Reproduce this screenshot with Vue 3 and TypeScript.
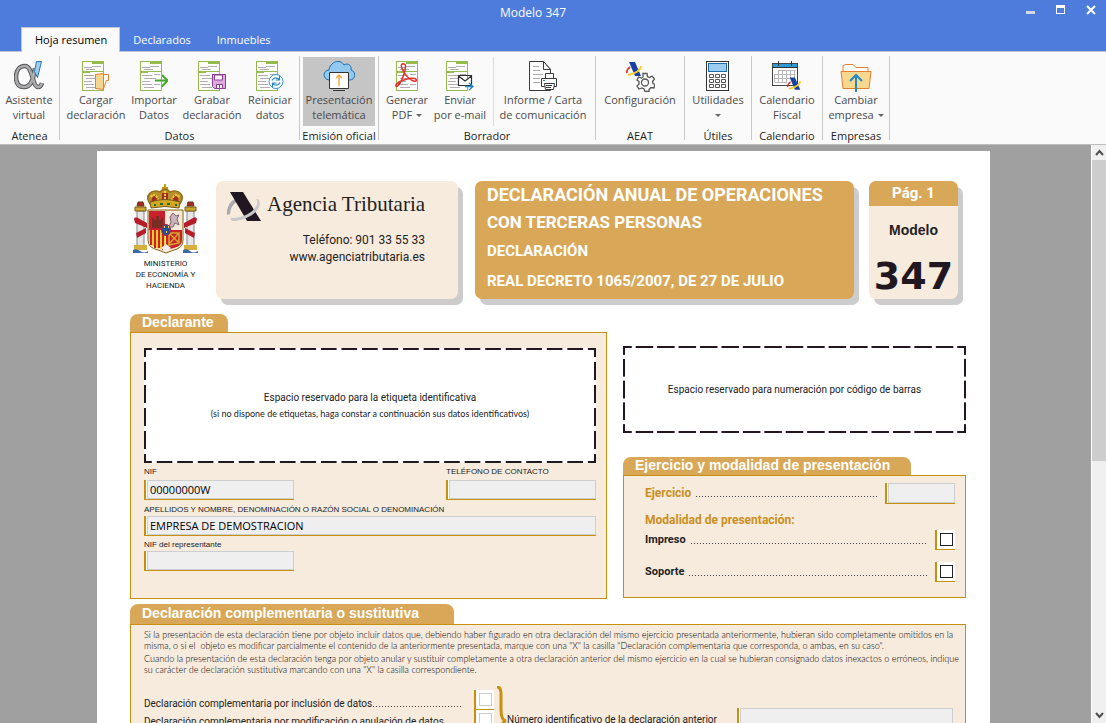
<script setup lang="ts">
import { ref } from 'vue'

interface Action {
  icon: string
  lines: string[]
  menu?: boolean
  active?: boolean
  split?: boolean
  size: string
}
interface Group {
  label: string
  actions: Action[]
}

const tabs = ['Hoja resumen', 'Declarados', 'Inmuebles']
const activeTab = ref(0)

const groups: Group[] = [
  { label: 'Atenea', actions: [{ icon: 'alpha', lines: ['Asistente', 'virtual'], size: 'm' }] },
  {
    label: 'Datos',
    actions: [
      { icon: 'load', lines: ['Cargar', 'declaración'], size: 'm' },
      { icon: 'import', lines: ['Importar', 'Datos'], size: 'm' },
      { icon: 'save', lines: ['Grabar', 'declaración'], size: 'm' },
      { icon: 'reset', lines: ['Reiniciar', 'datos'], size: 'm' },
    ],
  },
  { label: 'Emisión oficial', actions: [{ icon: 'cloud', lines: ['Presentación', 'telemática'], active: true, size: 'l' }] },
  {
    label: 'Borrador',
    actions: [
      { icon: 'pdf', lines: ['Generar', 'PDF'], menu: true, size: 's' },
      { icon: 'mail', lines: ['Enviar', 'por e-mail'], size: 'm' },
      { icon: 'print', lines: ['Informe / Carta', 'de comunicación'], split: true, size: 'xl' },
    ],
  },
  { label: 'AEAT', actions: [{ icon: 'config', lines: ['Configuración'], size: 'xl' }] },
  { label: 'Útiles', actions: [{ icon: 'calc', lines: ['Utilidades', ''], menu: true, size: 'm' }] },
  { label: 'Calendario', actions: [{ icon: 'calendar', lines: ['Calendario', 'Fiscal'], size: 'm' }] },
  { label: 'Empresas', actions: [{ icon: 'company', lines: ['Cambiar', 'empresa'], menu: true, size: 'm' }] },
]

const nif = ref('00000000W')
const phone = ref('')
const companyName = ref('EMPRESA DE DEMOSTRACION')
const agentNif = ref('')
const year = ref('')
const previousId = ref('')
</script>

<template>
  <div class="window">
    <svg class="defs" aria-hidden="true">
      <symbol id="doc" viewBox="0 0 28 32">
        <rect x="0.5" y="1.5" width="21" height="29" fill="#fff" stroke="#95bb4c" />
        <path d="M10 1h12v3H10zM0 11h8v2H0zM8 11h14v1H8z" fill="#95bb4c" />
        <path d="M2 7.500h8M10 6.500h9M4 9.500h9M2 15.500h10M14 14.500h6M4 18.500h12M2 21.500h8M2 24.500h10M4 27.500h10M14 24.500h6" stroke="#b3adb3" fill="none" />
      </symbol>
      <symbol id="aeat" viewBox="0 0 17 15">
        <path d="M3 0h6l6 14H9z" fill="#1740a0" />
        <path d="M4 5Q0 8 1 11" stroke="#e3342f" stroke-width="1.800" fill="none" />
        <path d="M15 4Q15 10 2 13" stroke="#f7cf2d" stroke-width="2" fill="none" />
      </symbol>
    </svg>

    <header class="chrome">
      <div class="titlebar">
        <h1>Modelo 347</h1>
        <div class="controls">
          <button type="button" aria-label="Minimizar"><svg width="10" height="10"><path d="M0 6h9v3H0z" fill="#d5d8e2" /></svg></button>
          <button type="button" aria-label="Maximizar"><svg width="10" height="10"><path d="M0 0h9v9H0zM1 3v5h7V3z" fill="#fff" fill-rule="evenodd" /></svg></button>
          <button type="button" aria-label="Cerrar"><svg width="10" height="10"><path d="M1 1l8 8M9 1l-8 8" stroke="#fff" stroke-width="2" /></svg></button>
        </div>
      </div>
      <nav class="tabs">
        <button v-for="(tab, i) in tabs" :key="tab" type="button" :class="{ current: i === activeTab }" @click="activeTab = i">{{ tab }}</button>
      </nav>
    </header>

    <div class="ribbon">
      <section v-for="group in groups" :key="group.label" class="group">
        <div class="actions">
          <button v-for="action in group.actions" :key="action.icon" type="button" class="action" :class="[action.size, { active: action.active, split: action.split }]">
            <svg v-if="action.icon === 'alpha'" width="30" height="32" viewBox="0 0 30 32">
              <path d="M21 8C19 22 16 27 10 27C4 27 2 23 2 17C2 11 5 6 11 6C19 6 18 27 24 27Q27 27 28 23" fill="none" stroke="#58585a" stroke-width="4.500" />
              <path d="M21 8C19 22 16 27 10 27C4 27 2 23 2 17C2 11 5 6 11 6C19 6 18 27 24 27Q27 27 28 23" fill="none" stroke="#aaa9ab" stroke-width="2.500" />
              <path d="M22.500 1.500h5l-4 16-3-6z" fill="#9fcdf0" stroke="#2474b8" />
            </svg>
            <svg v-else-if="action.icon === 'load'" width="28" height="32">
              <use href="#doc" width="28" height="32" />
              <path d="M13.500 14.500h13v6h-2l-3 8h-8z" fill="#fff" stroke="#e5802c" />
              <path d="M13.500 14.500l8-1v16l-8-1z" fill="#f5d78f" stroke="#e5802c" />
            </svg>
            <svg v-else-if="action.icon === 'import'" width="28" height="32">
              <use href="#doc" width="28" height="32" />
              <path d="M15 20.500h12M22 15l5.500 5.500-5.500 6" fill="none" stroke="#43a82d" stroke-width="2" />
            </svg>
            <svg v-else-if="action.icon === 'save'" width="28" height="32">
              <use href="#doc" width="28" height="32" />
              <path d="M14.500 14.500h13v14h-11l-2-2z" fill="#dfaade" stroke="#8a3d91" />
              <path d="M16.500 15h8v5h-8zM18.500 24.500h6v4h-6z" fill="#fff" stroke="#8a3d91" /><path d="M21 25h1v3h-1z" fill="#8a3d91" />
            </svg>
            <svg v-else-if="action.icon === 'reset'" width="28" height="32">
              <use href="#doc" width="28" height="32" />
              <circle cx="20" cy="21.500" r="7" fill="#fff" stroke="#3298cf" />
              <path d="M16 20.500q2-4 6-2l1.500 1.500m0-4v4h-4M24 22.500q-2 4-6 2l-1.500-1.500m0 4v-4h4" fill="none" stroke="#2388c4" stroke-width="1.200" />
            </svg>
            <svg v-else-if="action.icon === 'cloud'" width="32" height="32">
              <path d="M6 20C-1 19 0 10 6 10C7 2 17-2 21 5C26 2 29 7 28 10C34 12 32 20 27 20z" fill="#93c9ee" stroke="#1a6cae" />
              <path d="M6.500 12.500h19v16h-19z" fill="#fff" stroke="#333" />
              <path d="M16 26V15m-3 3l3-3 3 3" fill="none" stroke="#f1a93a" stroke-width="1.400" /><path d="M10 30.500h12" stroke="#333" />
            </svg>
            <svg v-else-if="action.icon === 'pdf'" width="26" height="32" viewBox="-2 0 26 32">
              <use href="#doc" width="28" height="32" />
              <path d="M8 4C5 3 4 6 8 12C11 18 17 22 20 21C22 19 17 17 11 19C4 21-1 24 0 26C2 28 6 20 8 14C10 8 10 4 8 4z" fill="none" stroke="#e0302b" stroke-width="1.500" />
            </svg>
            <svg v-else-if="action.icon === 'mail'" width="28" height="32">
              <use href="#doc" width="28" height="32" />
              <path d="M12.500 15.500h13v10h-13zM12.500 16l6.500 5 6.500-5" fill="#fff" stroke="#2e2e2e" stroke-width="1.200" />
              <path d="M19 26.500h8m-4-3.500l4 3.500-4 3.500" fill="none" stroke="#2388c4" stroke-width="1.400" />
            </svg>
            <svg v-else-if="action.icon === 'print'" width="28" height="32">
              <path d="M.5 1.500h14l7 8v21H.5z" fill="#fff" stroke="#3a3a3a" /><path d="M14.500 1.500v8h7z" fill="#fff" stroke="#3a3a3a" />
              <path d="M4 6.500h6M4 10.500h7M4 14.500h10M4 18.500h7M4 22.500h7" stroke="#aaa" />
              <path d="M16.500 13.500h8v5h-8zM12.500 18.500h15v8h-15z" fill="#fff" stroke="#3a3a3a" />
              <path d="M15.500 23.500h10l-1 6h-8z" fill="#fff" stroke="#3a3a3a" /><path d="M17 25.500h6M17 27.500h5" stroke="#3a3a3a" /><path d="M14 20h2v1h-2z" fill="#2388c4" />
            </svg>
            <svg v-else-if="action.icon === 'config'" width="29" height="32">
              <use href="#aeat" x="0" y="2" width="17" height="15" />
              <path d="M17 13.500h4l.5 3 2 1 2.500-1.500 2.500 3-2 2.500.5 2 2 1-1 3.500-3-.5-2 2v2h-4l-1-2.500-2-1-3 1-2-3 2-2v-2.500l-2-1.500 1.500-3 3 1 1.500-1z" fill="#fafafa" stroke="#555" stroke-width="1.300" />
              <circle cx="19" cy="22.500" r="3.500" fill="#fff" stroke="#555" stroke-width="1.300" />
            </svg>
            <svg v-else-if="action.icon === 'calc'" width="24" height="32">
              <rect x=".5" y="1.500" width="22" height="29" fill="#fff" stroke="#333" /><rect x="2.500" y="3.500" width="18" height="8" fill="#9ccdf0" stroke="#1d6caf" />
              <path v-for="y in [14, 19, 24]" :key="y" :d="`M3.500 ${y}.5h4v3h-4zM9.500 ${y}.5h4v3h-4zM15.500 ${y}.5h4v3h-4z`" fill="#fff" stroke="#555" />
            </svg>
            <svg v-else-if="action.icon === 'calendar'" width="30" height="32">
              <rect x=".5" y="3.500" width="25" height="22" fill="#fff" stroke="#444" /><path d="M1 4h24v4H1z" fill="#2f9bd3" />
              <path d="M6.500 1v5M19.500 1v5M0 7.500h26" stroke="#333" />
              <path d="M6.500 10.500h17M2.500 14.500h21M2.500 18.500h16M2.500 22.500h12M2.500 14v8M6.500 10v13M10.500 10v13M14.500 10v13M18.500 10v8M22.500 10v8" fill="none" stroke="#b8b8b8" />
              <use href="#aeat" x="15" y="17" width="15" height="14" />
            </svg>
            <svg v-else width="32" height="32">
              <path d="M3 11V5.500l3-1h7l3 3h12V12" fill="#fff" stroke="#e5802c" /><path d="M1 11.500h30l-2 17H3z" fill="#f7d88f" stroke="#e5802c" />
              <path d="M16 32V15m-6 6l6-6 6 6" fill="none" stroke="#2388c4" stroke-width="2" />
            </svg>
            <span v-for="(line, i) in action.lines" :key="i" class="line">{{ line }}<i v-if="action.menu && i === 1" class="caret" :class="{ alone: !line }"></i></span>
          </button>
        </div>
        <h2>{{ group.label }}</h2>
      </section>
    </div>

    <div class="workspace">
      <div class="viewport">
        <main class="sheet">
          <div class="masthead">
            <div class="ministry">
              <svg width="66" height="70" viewBox="0 0 66 70" role="img" aria-label="Escudo de España">
                <path d="M31 0h2v3h2v2h-6V3h2z" fill="#c99b12" />
                <path d="M18 21C10 11 19 5 27 8Q32 2 37 8C45 5 54 11 46 21z" fill="#b8912a" stroke="#94701a" stroke-width="1.500" />
                <path d="M19 19Q17 13 23 11L27 19zM29 18V9h6v9zM45 19Q47 13 41 11L37 19z" fill="#a42a22" />
                <path d="M18 13Q22 7 26 18M32 7v12M46 13Q42 7 38 18" fill="none" stroke="#efcf46" stroke-width="2" stroke-dasharray="2 1" />
                <path d="M17 18q15-5 30 0l-1 6q-14-3-28 0z" fill="#d2a823" stroke="#75561a" /><path d="M21 21h2m4-1h3m4 0h3m5 1h2" stroke="#236b35" stroke-width="2" />
                <path d="M4 27h7v35H4zM54 27h7v35h-7z" fill="#e6e6e6" stroke="#858585" />
                <path d="M2 23h11v4H2zM52 23h11v4H52z" fill="#cda72d" stroke="#785c16" />
                <path d="M4 22l1-4h5l1 4zM54 22l1-4h5l1 4z" fill="#ad2925" stroke="#5b3b14" />
                <path d="M1 61h13v5H1zM51 61h13v5H51z" fill="#d5b03c" /><path d="M0 66q3-2 7 1t8 0v2H0zM50 66q4-2 7 1t8 0v2H50z" fill="#3c69a2" />
                <path d="M1 35q1-3 4-1l9 5v5L2 39zM64 35q-1-3-4-1l-9 5v5l12-5zM3 49l10-5v5L4 54zM62 49l-10-5v5l9 5z" fill="#b51e29" />
                <path d="M15 26h35v30q0 8-9 10l-8 3-8-3q-10-2-10-10z" fill="#f4ead7" stroke="#83610e" />
                <path d="M16 27h16v19H16z" fill="#ca202d" /><path d="M19 44V34h2v2h2v-4h3v4h2v-2h2v10z" fill="#7b2d24" />
                <path d="M36 43l2-5-1-5 3-4 3 3 3-1-2 4 2 6-4-2-2 4z" fill="#c9b3bd" stroke="#80606d" />
                <path d="M16 46h16v20l-8-2q-8-2-8-8z" fill="#f5cc2c" /><path d="M18 46v15M22 46v18M26 46v18M30 46v20" stroke="#cc202e" stroke-width="2" />
                <path d="M33 46h16v10q0 6-8 8l-8 2z" fill="#c91f2b" /><path d="M36 49h10v10l-10 2zM36 49l10 10M46 49L36 60" fill="none" stroke="#d4a92b" stroke-width="1.500" />
                <path d="M28 64l5-4 5 4-5 4z" fill="#f4eee4" /><ellipse cx="33" cy="46" rx="4.500" ry="5.500" fill="#23509b" stroke="#b72432" />
                <path d="M31 43h1m3 0h1m-3 5h1" stroke="#f1d44b" stroke-width="2" />
              </svg>
              <p>MINISTERIO<br />DE ECONOMÍA Y<br />HACIENDA</p>
            </div>
            <div class="card agency">
              <div class="brand">
                <svg width="35" height="30" viewBox="0 0 35 30" aria-hidden="true">
                  <path d="M9 6Q-1 12 0 23l3-1Q3 14 11 9z" fill="#aaa" /><path d="M3 0h13l18 29H20z" fill="#211721" />
                  <path d="M29 7C35 13 21 27 3 26L5 29C23 29 38 15 31 7z" fill="#c9c9c9" />
                </svg>
                <span>Agencia Tributaria</span>
              </div>
              <p>Teléfono: 901 33 55 33<br />www.agenciatributaria.es</p>
            </div>
            <div class="card heading">
              <p class="first">DECLARACIÓN ANUAL DE OPERACIONES</p>
              <p class="second">CON TERCERAS PERSONAS</p>
              <p class="third">DECLARACIÓN</p>
              <p class="fourth">REAL DECRETO 1065/2007, DE 27 DE JULIO</p>
            </div>
            <div class="card model">
              <p class="page-no">Pág. 1</p>
              <p class="caption">Modelo</p>
              <p class="number">347</p>
            </div>
          </div>

          <div class="columns">
            <section>
              <h3 class="tab">Declarante</h3>
              <div class="panel declarant">
                <div class="dashed">
                  <p>Espacio reservado para la etiqueta identificativa</p>
                  <p class="small">(si no dispone de etiquetas, haga constar a continuación sus datos identificativos)</p>
                </div>
                <div class="pair">
                  <div class="short"><label for="nif">NIF</label><div class="field"><input id="nif" v-model="nif" type="text" /></div></div>
                  <div class="short"><label for="phone">TELÉFONO DE CONTACTO</label><div class="field"><input id="phone" v-model="phone" type="text" /></div></div>
                </div>
                <label class="low" for="company">APELLIDOS Y NOMBRE, DENOMINACIÓN O RAZÓN SOCIAL O DENOMINACIÓN</label>
                <div class="field"><input id="company" v-model="companyName" type="text" /></div>
                <label for="agent">NIF del representante</label>
                <div class="field short"><input id="agent" v-model="agentNif" type="text" /></div>
              </div>
            </section>
            <section class="right">
              <div class="dashed barcode"><p>Espacio reservado para numeración por código de barras</p></div>
              <h3 class="tab">Ejercicio y modalidad de presentación</h3>
              <div class="panel mode">
                <div class="entry year"><label for="year">Ejercicio</label><span class="dots"></span><div class="field"><input id="year" v-model="year" type="text" /></div></div>
                <h4>Modalidad de presentación:</h4>
                <div class="entry"><label for="printed">Impreso</label><span class="dots"></span><div class="tick"><input id="printed" type="checkbox" /></div></div>
                <div class="entry"><label for="support">Soporte</label><span class="dots"></span><div class="tick"><input id="support" type="checkbox" /></div></div>
              </div>
            </section>
          </div>

          <section class="amend">
            <h3 class="tab">Declaración complementaria o sustitutiva</h3>
            <div class="panel">
              <p class="legal">
                <span class="full">Si la presentación de esta declaración tiene por objeto incluir datos que, debiendo haber figurado en otra declaración del mismo ejercicio presentada anteriormente, hubieran sido completamente omitidos en la</span>
                <span>misma, o si el&nbsp; objeto es modificar parcialmente el contenido de la anteriormente presentada, marque con una "X" la casilla "Declaración complementaria que corresponda, o ambas, en su caso".</span>
              </p>
              <p class="legal">
                <span class="full">Cuando la presentación de esta declaración tenga por objeto anular y sustituir completamente a otra declaración anterior del mismo ejercicio en la cual se hubieran consignado datos inexactos o erróneos, indique</span>
                <span>su carácter de declaración sustitutiva marcando con una "X" la casilla correspondiente.</span>
              </p>
              <div class="options">
                <div class="names">
                  <div class="entry"><label for="add">Declaración complementaria por inclusión de datos</label><span class="dots"></span></div>
                  <div class="entry"><label for="modify">Declaración complementaria por modificación o anulación de datos</label></div>
                </div>
                <div class="ticks">
                  <div class="tick"><input id="add" type="checkbox" disabled /></div>
                  <div class="tick"><input id="modify" type="checkbox" disabled /></div>
                </div>
                <svg class="brace" width="10" height="70" viewBox="0 0 10 70" aria-hidden="true"><path d="M0 1Q4 1 4 8V24Q4 34 9 35Q4 36 4 46V62Q4 69 0 69" fill="none" stroke="#c8900f" stroke-width="3" /></svg>
                <label class="previous" for="previous">Número identificativo de la declaración anterior</label>
                <div class="field"><input id="previous" v-model="previousId" type="text" /></div>
              </div>
            </div>
          </section>
        </main>
      </div>
      <div class="scroll">
        <button type="button" aria-label="Subir"><svg width="9" height="7"><path d="M1 6l3.500-4L8 6" fill="none" stroke="#505050" stroke-width="2" /></svg></button>
        <div class="track"><div class="thumb"></div></div>
        <button type="button" aria-label="Bajar"><svg width="9" height="7"><path d="M1 1l3.500 4L8 1" fill="none" stroke="#505050" stroke-width="2" /></svg></button>
      </div>
    </div>
  </div>
</template>

<style>
body { margin: 0; }
</style>

<style scoped>
* { box-sizing: border-box; }
h1, h2, h3, h4, p { margin: 0; font-weight: 400; }
button { font: inherit; color: inherit; border: 0; padding: 0; background: none; }
svg { display: block; flex: none; }
.window { height: 100vh; display: flex; flex-direction: column; overflow: hidden; font: 11px/15px "Open Sans", "Noto Sans", sans-serif; color: #1e1e1e; }
.defs { width: 0; height: 0; position: absolute; }

.chrome { background: #4e7cdc; color: #fff; flex: none; }
.titlebar { display: flex; height: 27px; }
.titlebar h1 { flex: 1; padding-left: 50px; text-align: center; font-size: 12px; line-height: 26px; }
.controls { display: flex; }
.controls button { width: 30px; display: flex; justify-content: center; padding-top: 5px; }
.tabs { display: flex; height: 25px; padding-left: 21px; box-shadow: inset 0 -1px #c0c4cc; }
.tabs button { padding: 0 12px; border: 1px solid transparent; border-bottom: 0; line-height: 24px; }
.tabs .current { padding: 0 12px 0 13px; background: #fafafa; border-color: #c6c6c6; color: #000; }

.ribbon { flex: none; display: flex; height: 93px; padding: 4px 0; background: #fafafa; border-bottom: 1px solid #bdbdbd; }
.group { display: flex; flex-direction: column; padding: 1px 0 0; border-right: 1px solid #c8c8c8; }
.group h2 { text-align: center; font-size: 11px; line-height: 15px; margin-top: 2px; white-space: nowrap; }
.actions { display: flex; justify-content: center; padding: 0 3px; }
.group:first-child .actions { padding: 0 1px 0 0; }
.group:nth-child(2) .actions { padding: 0 0 0 7px; }
.group:nth-child(4) .actions { padding: 0 3px 0 4px; }
.group:nth-child(5) .actions { padding: 0; }
.group:nth-child(6) .actions, .group:nth-child(8) .actions { padding: 0 4px; }
.group:nth-child(7) .actions { padding: 0 6px; }
.action { height: 69px; display: flex; flex-direction: column; align-items: center; padding-top: 3px; color: #4a4a4a; line-height: 15px; white-space: nowrap; }
.action.s { width: 48px; }
.action.m { width: 58px; }
.action.l { width: 72px; }
.action.xl { width: 88px; }
.action.active { background: #c5c5c5; }
.action.split { border-left: 1px solid #ddd; margin-left: 4px; width: 99px; }
.line { display: block; min-height: 15px; }
.caret { display: inline-block; border: 3px solid transparent; border-top-color: #666; border-bottom: 0; margin: 0 0 2px 4px; }
.caret.alone { margin-left: 0; }

.workspace { flex: 1; min-height: 0; display: flex; background: #a0a0a0; }
.viewport { flex: 1; min-width: 0; overflow: hidden; padding: 6px 101px 0 97px; }
.sheet { background: #fff; padding: 30px 24px 40px 33px; font-family: Roboto, "Liberation Sans", sans-serif; color: #222; }
.scroll { width: 15px; flex: none; display: flex; flex-direction: column; background: #f0f0f0; border-left: 1px solid #fff; }
.scroll button { height: 15px; display: flex; align-items: center; justify-content: center; }
.track { flex: 1; }
.thumb { height: 55%; background: #cdcdcd; }

.masthead { display: grid; grid-template-columns: 71px 242px minmax(0, 1fr) 89px; column-gap: 15px; padding-right: 8px; height: 118px; }
.ministry { display: flex; flex-direction: column; align-items: center; padding-top: 3px; }
.ministry p { font-size: 8px; line-height: 11px; text-align: center; margin-top: 4px; white-space: nowrap; }
.card { border-radius: 7px; box-shadow: 5px 6px #ccc; background: #f7ebdd; }
.agency { padding: 11px 33px 0 11px; }
.brand { display: flex; gap: 5px; font: 21px/24px "Liberation Serif", serif; white-space: nowrap; }
.agency p { text-align: right; font-size: 12px; line-height: 17px; margin-top: 10px; }
.heading { margin-left: 2px; padding: 0 0 0 12px; background: #d8a858; color: #fff; white-space: nowrap; }
.heading p, .model p { font-weight: 700; }
.first { font-size: 18px; line-height: 27px; }
.second { font-size: 17px; line-height: 28px; }
.third { font-size: 15px; line-height: 30px; }
.fourth { font-size: 15px; line-height: 30px; }
.model { text-align: center; }
.page-no { background: #d8a858; color: #fff; font-size: 15px; line-height: 25px; border-radius: 7px 7px 0 0; }
.caption { font-family: "Liberation Sans", sans-serif; font-size: 14px; line-height: 20px; margin-top: 14px; }
.number { font-family: "DejaVu Sans", sans-serif; font-size: 38px; line-height: 40px; margin-top: 16px; color: #211721; }

.columns { display: grid; grid-template-columns: minmax(0, 477fr) minmax(0, 343fr); gap: 16px; margin-top: 15px; }
.tab { width: max-content; height: 18px; padding: 0 14px 0 12px; border-radius: 8px 8px 0 0; background: #d8a858; color: #fff; font: 700 14px/17px "Liberation Sans", sans-serif; }
.panel { background: #f7ebdd; border: 1px solid #c8900f; padding: 15px 10px 27px 13px; }
.dashed {
  --h: linear-gradient(90deg, #211721 39%, transparent 39% 61%, #211721 61%);
  --v: linear-gradient(#211721 39%, transparent 39% 61%, #211721 61%);
  height: 115px; display: flex; flex-direction: column; align-items: center; justify-content: center; text-align: center;
  background: var(--h) 0 0 / 21px 2px round no-repeat, var(--h) 0 100% / 21px 2px round no-repeat, var(--v) 0 0 / 2px 22px no-repeat round, var(--v) 100% 0 / 2px 22px no-repeat round, #fff;
  font-size: 10px; line-height: 17px;
}
.dashed .small { font-family: Lato, sans-serif; font-size: 9px; line-height: 16px; }
.barcode { height: 87px; }
.pair { display: flex; justify-content: space-between; }
.short { width: 150px; }
.declarant label { display: block; font-family: "Liberation Sans", sans-serif; font-size: 8px; line-height: 17px; height: 15px; white-space: nowrap; }
.declarant .pair label { height: 17px; }
.declarant .low { height: 16px; line-height: 20px; }
.field { height: 21px; display: flex; padding-left: 1px; background: #fff; border-left: 2px solid #c8900f; border-bottom: 1px solid #c8900f; }
.declarant .field { height: 20px; }
.field input { flex: 1; min-width: 0; width: 100%; border: 1px solid #ccced2; border-radius: 0; background: #efefef; padding: 0 2px; font: 11px/16px "Open Sans", "Noto Sans", sans-serif; color: #000; outline: 0; }
.right { padding-top: 32px; }
.right .tab { margin-top: 24px; padding-right: 21px; }
.mode { padding: 7px 10px 16px 21px; }
.entry { display: flex; align-items: center; gap: 5px; height: 19px; font-size: 11px; font-weight: 700; white-space: nowrap; }
.entry + .entry { margin-top: 13px; }
.dots { flex: 1; min-width: 0; height: 1px; margin-top: 7px; background: repeating-linear-gradient(90deg, #444 0 1px, transparent 1px 3px); }
.mode .dots { margin-right: 3px; }
.year { height: 20px; font-size: 12px; }
.year label, .mode h4 { color: #c98f22; font-size: 12px; font-weight: 700; }
.year .field { width: 70px; }
.mode h4 { line-height: 18px; margin: 8px 0 1px; }
.tick { width: 20px; height: 20px; display: flex; align-items: center; justify-content: center; border-left: 2px solid #c8900f; border-bottom: 1px solid #c8900f; background: #fff; }
.tick input { appearance: none; width: 13px; height: 13px; margin: 0; border: 1px solid #222; background: #fff; }
.tick input:disabled { border-color: #ccc; }
.amend { margin-top: 5px; }
.amend .tab { height: 20px; line-height: 19px; padding-right: 35px; }
.amend .panel { padding: 4px 12px 27px 13px; }
.legal { font-family: Lato, sans-serif; font-weight: 300; font-size: 9px; line-height: 11px; margin-bottom: 2px; color: #000; white-space: nowrap; }
.legal span { display: block; }
.legal .full { text-align: justify; text-align-last: justify; }
.options { display: flex; margin-top: 15px; }
.names { width: 318px; padding-top: 4px; }
.names .entry { height: 18px; font-size: 10px; font-weight: 400; gap: 1px; margin-top: 0; }
.ticks { margin-left: 12px; }
.brace { margin: -4px 0 0 3px; }
.previous { font-size: 10px; line-height: 18px; padding-top: 21px; white-space: nowrap; }
.options .field { flex: 1; margin: 18px 0 0 20px; }
</style>
